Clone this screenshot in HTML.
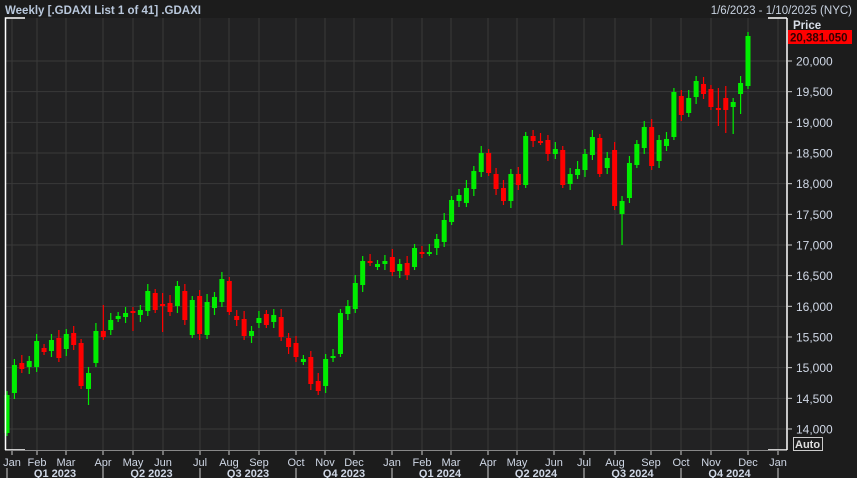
<!DOCTYPE html>
<html><head><meta charset="utf-8"><style>
html,body{margin:0;padding:0;background:#1c1c1c;width:857px;height:478px;overflow:hidden}
svg{display:block}
text{font-family:"Liberation Sans",sans-serif}
</style></head><body>
<svg id="s" width="857" height="478" xmlns="http://www.w3.org/2000/svg">
<rect width="857" height="478" fill="#1c1c1c"/>
<rect x="5" y="18" width="782" height="432" fill="#222223"/>
<g id="grid" stroke="#3a3a3a" stroke-width="1"></g>
<g id="c"></g>
<g stroke="#fff" stroke-width="1.5" fill="none">
<path d="M5.5 450 V18 H25"/><path d="M5.5 450 H25"/>
<path d="M787 18 V450 M768 18 H787 M768 450 H787"/>
</g>
<line x1="5" y1="450.5" x2="787" y2="450.5" stroke="#888"/>
<text x="5" y="14" fill="#b9c8dc" font-size="11.5" font-weight="bold">Weekly [.GDAXI List 1 of 41] .GDAXI</text>
<text x="852" y="14" fill="#c8d2e0" font-size="11.5" text-anchor="end">1/6/2023 - 1/10/2025 (NYC)</text>
<text x="793" y="29" fill="#d8dee8" font-size="11.5" font-weight="bold">Price</text>
<rect x="788" y="30" width="64" height="14" fill="#ff0000"/>
<text x="790" y="41.5" fill="#300" font-size="11.5" font-weight="bold">20,381.050</text>
<g id="yl" fill="#d0d8e6" font-size="12"></g>
<g id="xl" fill="#d0d8e6" font-size="11"></g>
<rect x="793.5" y="437.5" width="29" height="13" fill="none" stroke="#ccc"/>
<text x="795" y="448" fill="#e0e0e0" font-size="11" font-weight="bold">Auto</text>
</svg>
<script>
var NS="http://www.w3.org/2000/svg";
function el(p,t,a,txt){var e=document.createElementNS(NS,t);for(var k in a)e.setAttribute(k,a[k]);if(txt)e.textContent=txt;document.getElementById(p).appendChild(e);return e;}
// horizontal grid
for(var p=14000;p<=20000;p+=500){var y=61+(20000-p)*0.06133;
el("grid","line",{x1:5,x2:787,y1:y,y2:y});
el("yl","line",{x1:787,x2:792,y1:y,y2:y,stroke:"#ccc"});
el("yl","text",{x:796,y:y+4.5},(p/1000|0)+","+("00"+p%1000).slice(-3));}
var mx=[12,37,66,103,133,163,200,229,259,296,325,354,392,422,451,488,517,554,584,615,651,681,711,748,778];
var mn=["Jan","Feb","Mar","Apr","May","Jun","Jul","Aug","Sep","Oct","Nov","Dec"];
mx.forEach(function(x,i){el("grid","line",{x1:x,x2:x,y1:18,y2:450});
el("xl","line",{x1:x,x2:x,y1:451,y2:455,stroke:"#ccc"});
el("xl","text",{x:x,y:466,"text-anchor":"middle"},mn[i%12]);});
var qx=[7,103,200,296,392,488,584,681,778];
qx.forEach(function(x){el("xl","line",{x1:x,x2:x,y1:468,y2:478,stroke:"#ccc"});});
var ql=["Q1 2023","Q2 2023","Q3 2023","Q4 2023","Q1 2024","Q2 2024","Q3 2024","Q4 2024"];
for(var i=0;i<8;i++)el("xl","text",{x:(qx[i]+qx[i+1])/2,y:477,"text-anchor":"middle","font-weight":"bold"},ql[i]);
var d=[[395,433,1],[365,393,1],[363,369,0],[361,367,1],[341,367,1],[348,352,0],[340,351,1],[338,358,0],[334,349,1],[333,345,0],
[343,386,0],[373,389,1,0,405],[331,363,1],[331,337,0,305,340],[320,330,1],[316,319,1],[313,317,1],[311,311,0,307,331],[310,315,1],[291,311,1],
[293,310,0],[304,305,0,293,332],[303,312,0],[286,306,1],[291,320,0],[300,335,1],[296,334,0],[302,335,1],[297,308,1],[279,302,1],
[281,312,0],[316,320,0],[319,336,0],[331,336,1],[318,323,1],[314,325,0],[315,322,1],[317,337,0],[338,347,0],[343,357,0],
[359,362,1],[357,384,0],[381,391,0],[359,386,1],[356,357,1],[313,354,1],[306,314,1],[283,309,1],[261,285,1],[261,261,0],
[264,267,1],[261,264,1],[257,272,0],[264,271,1],[263,275,0],[248,267,1],[252,252,0],[252,252,1],[239,248,1],[220,242,1],
[200,222,1],[195,201,1],[188,203,1],[171,189,1],[153,172,1],[153,173,0],[174,189,0],[188,201,0],[174,201,1],[174,185,0],
[136,185,1],[136,141,0],[141,141,0],[140,154,0],[149,154,1],[150,185,0],[174,184,1],[169,175,1],[154,170,1],[137,155,1],
[138,174,0],[158,168,1],[150,206,0],[201,214,1,0,245],[163,198,1],[144,165,1],[127,148,1],[127,166,0],[140,161,1],[139,146,1],
[92,137,1],[96,115,0],[98,113,1],[81,97,1],[84,94,0],[89,107,0],[108,108,0,88,126],[98,110,0,86,133],[102,107,1,98,134],[83,94,1,0,114],[36,86,1]];
d.forEach(function(c,i){var x=7+i*7.41;var col=c[2]?"#00ee00":"#ff0000";
var hi=c[3]||c[0]-4-(i*7%5);var lo=c[4]||c[1]+3+(i*3%5);
el("c","line",{x1:x,x2:x,y1:hi,y2:lo,stroke:col,"stroke-width":1.2});
var h=Math.max(2,c[1]-c[0]);el("c","rect",{x:x-2.5,y:c[0],width:5,height:h,fill:col});});
</script>
</body></html>
